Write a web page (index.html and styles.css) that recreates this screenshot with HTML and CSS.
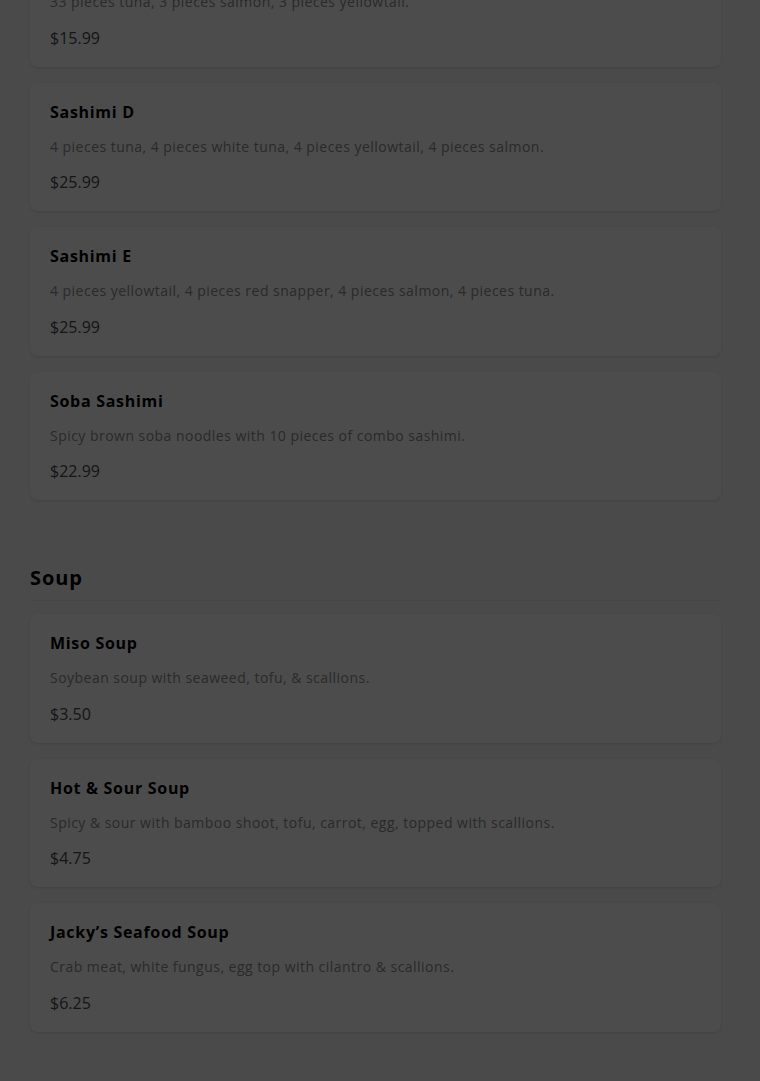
FILE: index.html
```html
<!DOCTYPE html>
<html lang="en">
<head>
<meta charset="utf-8">
<title>Menu</title>
<link rel="stylesheet" href="styles.css">
</head>
<body>
<main class="menu">
  <section class="section section-first">
    <div class="items">
      <article class="card">
        <h3 class="name">Sashimi C</h3>
        <p class="desc">33 pieces tuna, 3 pieces salmon, 3 pieces yellowtail.</p>
        <p class="price">$15.99</p>
      </article>
      <article class="card">
        <h3 class="name">Sashimi D</h3>
        <p class="desc">4 pieces tuna, 4 pieces white tuna, 4 pieces yellowtail, 4 pieces salmon.</p>
        <p class="price">$25.99</p>
      </article>
      <article class="card">
        <h3 class="name">Sashimi E</h3>
        <p class="desc">4 pieces yellowtail, 4 pieces red snapper, 4 pieces salmon, 4 pieces tuna.</p>
        <p class="price">$25.99</p>
      </article>
      <article class="card">
        <h3 class="name">Soba Sashimi</h3>
        <p class="desc">Spicy brown soba noodles with 10 pieces of combo sashimi.</p>
        <p class="price">$22.99</p>
      </article>
    </div>
  </section>
  <section class="section">
    <h2 class="section-title">Soup</h2>
    <div class="items">
      <article class="card">
        <h3 class="name">Miso Soup</h3>
        <p class="desc">Soybean soup with seaweed, tofu, &amp; scallions.</p>
        <p class="price">$3.50</p>
      </article>
      <article class="card">
        <h3 class="name">Hot &amp; Sour Soup</h3>
        <p class="desc">Spicy &amp; sour with bamboo shoot, tofu, carrot, egg, topped with scallions.</p>
        <p class="price">$4.75</p>
      </article>
      <article class="card">
        <h3 class="name">Jacky’s Seafood Soup</h3>
        <p class="desc">Crab meat, white fungus, egg top with cilantro &amp; scallions.</p>
        <p class="price">$6.25</p>
      </article>
    </div>
  </section>
</main>
<div class="overlay"></div>
</body>
</html>
```
FILE: styles.css
```css
html, body {
  margin: 0;
  padding: 0;
  background: #f8f8f8;
  font-family: "Open Sans", "Liberation Sans", sans-serif;
  color: #000;
}
.menu {
  padding: 0 39px 0 30px;
  margin-top: -62px;
}
.section {
  padding-bottom: 47px;
}
.section-title {
  margin: 19px 0 13px;
  font-size: 20px;
  line-height: 24px;
  font-weight: 700;
  letter-spacing: 0.9px;
  padding-bottom: 10px;
  border-bottom: 1px solid #eaeaea;
}
.items {
  display: flex;
  flex-direction: column;
  gap: 16px;
}
.card {
  background: #fff;
  border-radius: 8px;
  box-shadow: 0 1px 3px rgba(0,0,0,0.12);
  padding: 20px;
  display: flex;
  flex-direction: column;
  gap: 17px;
}
.name {
  margin: 0;
  font-size: 16px;
  line-height: 18px;
  font-weight: 700;
  letter-spacing: 0.7px;
  color: #000;
}
.desc {
  margin: 0;
  font-size: 14px;
  line-height: 18.5px;
  letter-spacing: 0.47px;
  color: #8c8c8c;
}
.price {
  margin: 0;
  font-size: 16px;
  line-height: 18px;
  color: #4a4a4a;
}
.overlay {
  position: fixed;
  inset: 0;
  background: rgba(0,0,0,0.7);
}
```
